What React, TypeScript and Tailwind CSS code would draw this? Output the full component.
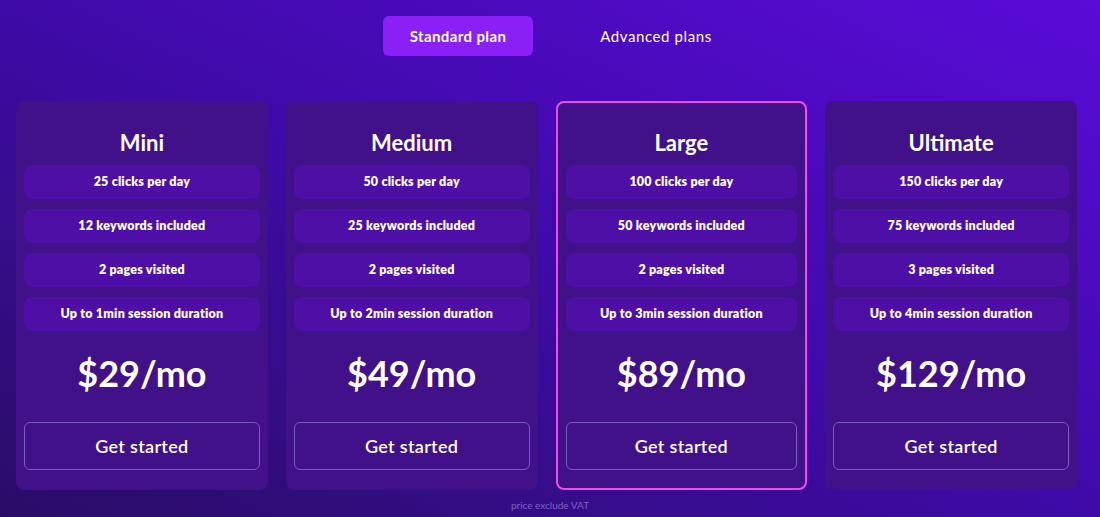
const plans = [
  {
    name: "Mini",
    features: ["25 clicks per day", "12 keywords included", "2 pages visited", "Up to 1min session duration"],
    price: "$29/mo",
  },
  {
    name: "Medium",
    features: ["50 clicks per day", "25 keywords included", "2 pages visited", "Up to 2min session duration"],
    price: "$49/mo",
  },
  {
    name: "Large",
    features: ["100 clicks per day", "50 keywords included", "2 pages visited", "Up to 3min session duration"],
    price: "$89/mo",
    featured: true,
  },
  {
    name: "Ultimate",
    features: ["150 clicks per day", "75 keywords included", "3 pages visited", "Up to 4min session duration"],
    price: "$129/mo",
  },
]

function PlanCard({ p }: { p: (typeof plans)[number] }) {
  return (
    <div
      className={[
        "flex flex-col rounded-lg bg-[#41118a] px-[8px]",
        p.featured ? "border-2 border-[#f04ce6] pt-[24px] pb-[18px]" : "pt-[26px] pb-[20px]",
      ].join(" ")}
    >
      <h3 className="text-center text-[22px] font-bold leading-[32px] text-white">{p.name}</h3>
      <div className="mt-[6px] flex flex-col gap-[10px]">
        {p.features.map((f) => (
          <div
            key={f}
            className="flex h-[34px] items-center justify-center rounded-lg bg-[#4e0fa6] text-[12.5px] font-extrabold tracking-[0.2px] text-white"
          >
            {f}
          </div>
        ))}
      </div>
      <div className="mt-[20px] text-center text-[36px] font-bold leading-[44px] text-white">{p.price}</div>
      <button className="mt-[27px] h-[48px] rounded-md border border-[#7b5bc0] text-[18px] font-semibold tracking-[0.3px] text-white">
        Get started
      </button>
    </div>
  )
}

export default function App() {
  return (
    <div
      className="h-[517px] w-[1100px] overflow-hidden bg-gradient-to-tr from-[#2a0c66] via-[#3f0aa8] to-[#5a0bd8] text-white"
      style={{ fontFamily: "Lato, 'Noto Sans', sans-serif" }}
    >
      <div className="flex justify-center gap-[48px] pt-[16px] pl-[14px]">
        <button className="h-[40px] w-[150px] rounded-md bg-[#8a1ff6] text-[15px] font-bold tracking-[0.4px] text-white">
          Standard plan
        </button>
        <button className="h-[40px] w-[150px] rounded-md text-[15px] font-normal tracking-[0.6px] text-white">
          Advanced plans
        </button>
      </div>
      <div className="mt-[45px] grid grid-cols-4 gap-[18px] pl-[16px] pr-[23px]">
        {plans.map((p) => (
          <PlanCard key={p.name} p={p} />
        ))}
      </div>
      <p className="mt-[8px] text-center text-[10px] text-[#7e62c4]">price exclude VAT</p>
    </div>
  )
}
